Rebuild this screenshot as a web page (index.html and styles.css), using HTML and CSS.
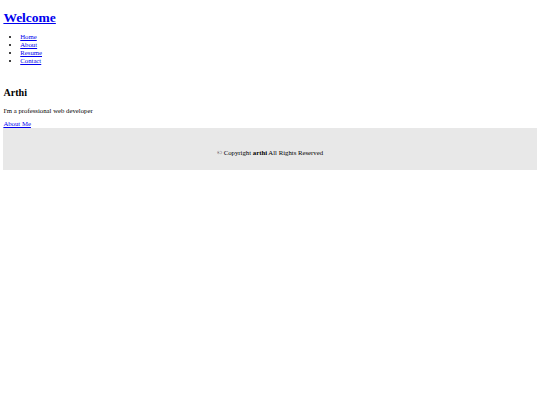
FILE: index.html
```html
<!DOCTYPE html>
<html lang="en">
<head>
<meta charset="utf-8">
<title>Arthi</title>
<link rel="stylesheet" href="styles.css">
</head>
<body>
<header class="site-header">
  <h1 class="site-title"><a href="#">Welcome</a></h1>
  <nav class="site-nav">
    <ul class="nav-list">
      <li><a href="#">Home</a></li>
      <li><a href="#">About</a></li>
      <li><a href="#">Resume</a></li>
      <li><a href="#">Contact</a></li>
    </ul>
  </nav>
</header>
<section class="intro">
  <h2 class="intro-name">Arthi</h2>
  <p class="intro-text">I'm a professional web developer</p>
  <a class="intro-link" href="#">About Me</a>
</section>
<footer class="site-footer">
  <p class="copyright">&copy; Copyright <b>arthi</b> All Rights Reserved</p>
</footer>
</body>
</html>
```

FILE: styles.css
```css
html {
  background: #ffffff;
}
body {
  margin: 3.375px;
  font-family: "Liberation Serif", "Times New Roman", serif;
  font-size: 6.75px;
  line-height: 1.15;
  color: #000000;
}
a {
  color: #0000ee;
}
.site-title {
  font-size: 13.5px;
  margin: 7px 0 7.5px;
  font-weight: bold;
}
.nav-list {
  margin: 6.75px 0;
  padding-left: 16.875px;
  list-style: disc;
}
.intro {
  padding-top: 7.2px;
}
.intro-name {
  font-size: 10.125px;
  font-weight: bold;
  margin: 8.4px 0;
}
.intro-text {
  margin: 8.4px 0 5.75px;
}
.intro-link {
  display: inline-block;
}
.site-footer {
  background: #e8e8e8;
  padding: 21px 0 13px;
  text-align: center;
}
.copyright {
  margin: 0;
}
```
